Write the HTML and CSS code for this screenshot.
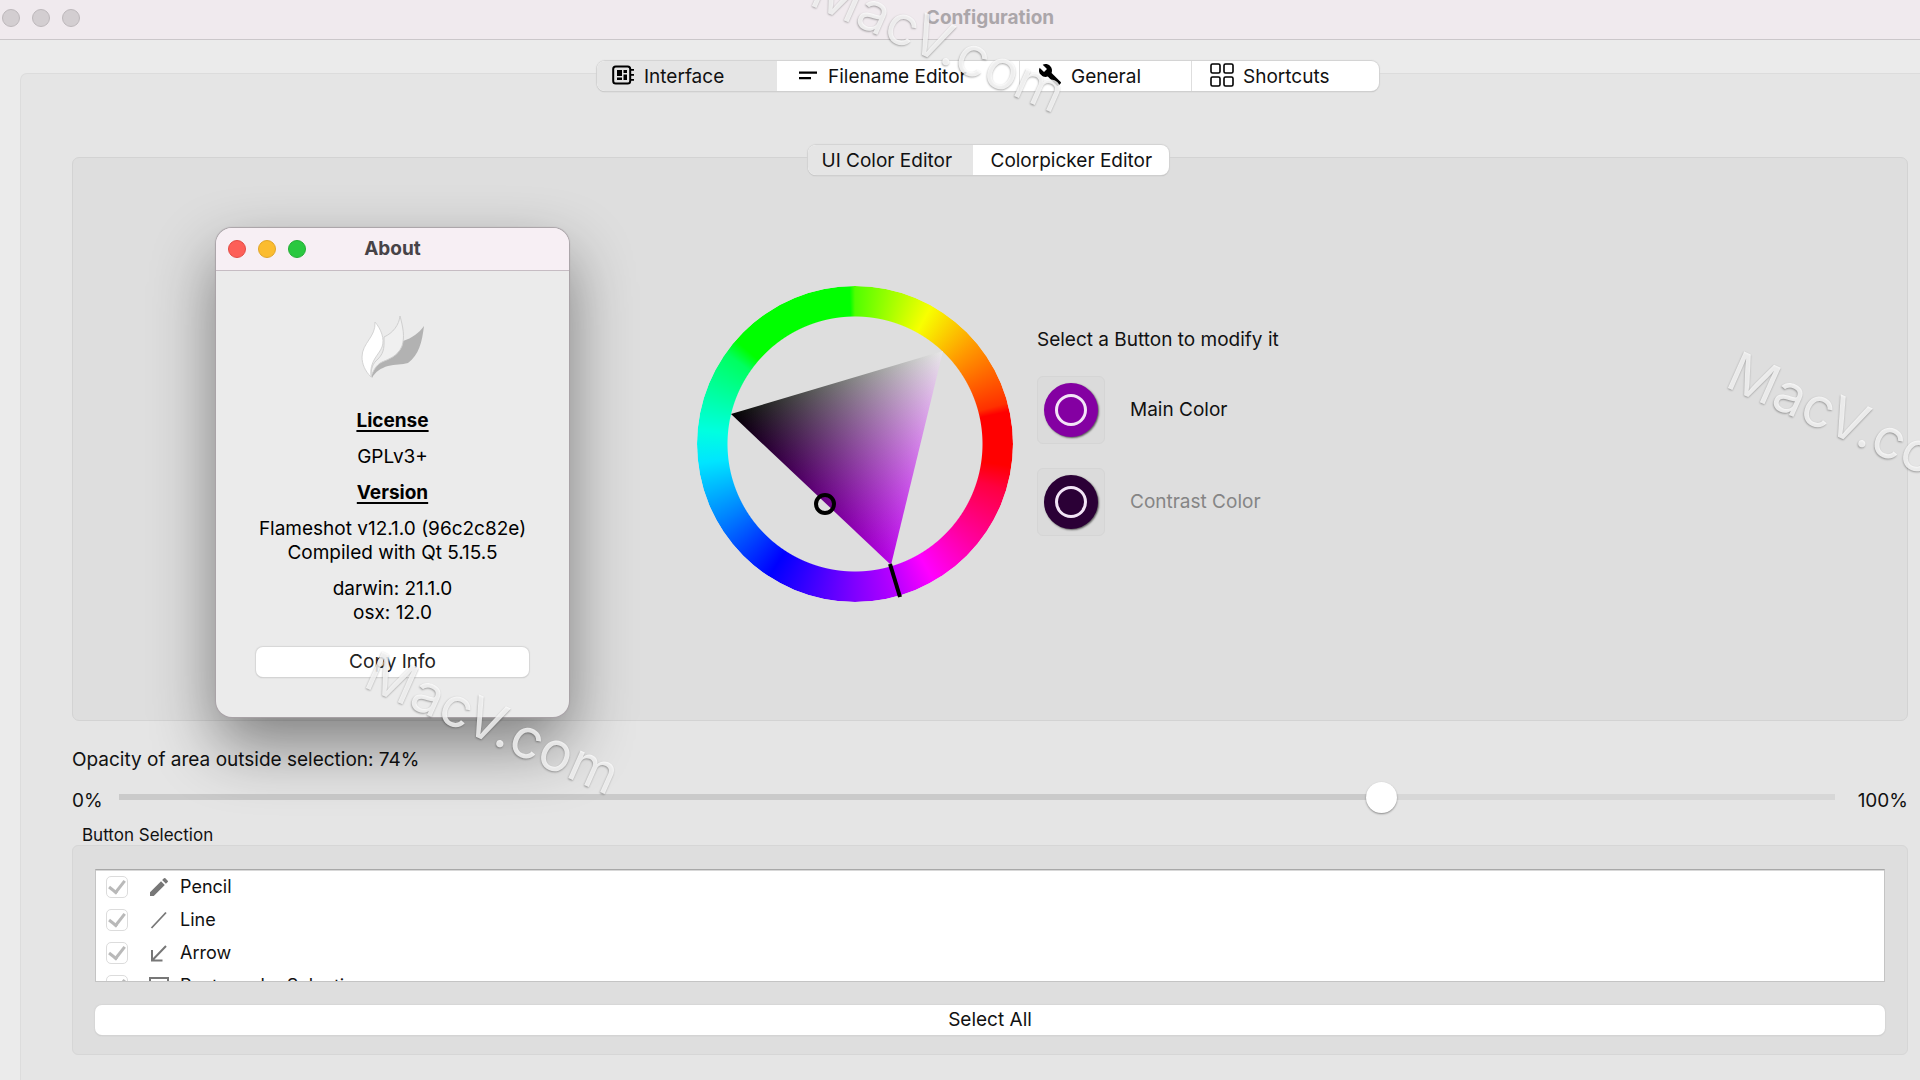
FILE: index.html
```html
<!DOCTYPE html>
<html lang="en">
<head>
<meta charset="utf-8">
<title>Configuration</title>
<link rel="stylesheet" href="styles.css">
</head>
<body>
<main class="window">
  <header class="titlebar">
    <div class="lights">
      <span class="light"></span><span class="light"></span><span class="light"></span>
    </div>
    <h1 class="title">Configuration</h1>
  </header>

  <div class="content">
    <nav class="tabs" role="tablist">
      <button class="tab tab-interface selected" role="tab" aria-selected="true">
        <svg class="tab-icon" viewBox="0 0 24 24" aria-hidden="true"><rect x="2.2" y="3.500" width="17" height="17" rx="2.5" fill="none" stroke="#000" stroke-width="2"/><path d="M20 6h3v1.800h-3zM20 11h3v1.800h-3zM20 16h3v1.800h-3zM6 7h5v6H6zM12.500 7H16v3h-3.500zM12.500 11.500H16V17h-3.500zM6 14.500h5V17H6z"/></svg>
        Interface
      </button>
      <button class="tab tab-filename" role="tab">
        <svg class="tab-icon" viewBox="0 0 24 24" aria-hidden="true"><path d="M4 8.500h18v2.200H4zM4 14h12v2.200H4z"/></svg>
        Filename Editor
      </button>
      <button class="tab tab-general" role="tab">
        <svg class="tab-icon" viewBox="0 0 24 24" aria-hidden="true"><path d="M22.700 19l-9.100-9.100c.9-2.300.4-5-1.500-6.900-2-2-5-2.400-7.400-1.300L9 6 6 9 1.600 4.700C.4 7.100.9 10.100 2.900 12.100c1.900 1.900 4.600 2.400 6.900 1.500l9.100 9.100c.4.4 1 .4 1.400 0l2.300-2.300c.5-.4.5-1.100.1-1.400z"/></svg>
        General
      </button>
      <button class="tab tab-shortcuts" role="tab">
        <svg class="tab-icon" viewBox="0 0 24 24" aria-hidden="true"><g fill="none" stroke="#000" stroke-width="1.600"><rect x="1" y="1" width="9" height="9" rx="1.500"/><rect x="14" y="1" width="9" height="9" rx="1.500"/><rect x="1" y="14" width="9" height="9" rx="1.500"/><rect x="14" y="14" width="9" height="9" rx="1.500"/></g></svg>
        Shortcuts
      </button>
    </nav>

    <section class="panel">
      <nav class="tabs" role="tablist">
        <button class="tab tab-ui selected" role="tab" aria-selected="true">UI Color Editor</button>
        <button class="tab tab-picker" role="tab">Colorpicker Editor</button>
      </nav>

      <section class="editor">
        <div class="wheel">
          <div class="wheel-ring"></div>
          <svg class="wheel-triangle" viewBox="0 0 316 316" aria-hidden="true">
            <defs>
              <linearGradient id="white" gradientUnits="userSpaceOnUse" x1="114" y1="204" x2="244" y2="66"><stop offset="0" stop-color="#000"/><stop offset="1" stop-color="#e6e6e6"/></linearGradient>
              <linearGradient id="hue" gradientUnits="userSpaceOnUse" x1="140" y1="97" x2="194" y2="279"><stop offset="0" stop-color="#000"/><stop offset="1" stop-color="#b800e8"/></linearGradient>
              <clipPath id="triangle"><path d="M34 128L246 65 194 279z"/></clipPath>
            </defs>
            <g class="mix" clip-path="url(#triangle)">
              <rect width="316" height="316" fill="url(#white)"/>
              <rect class="add" width="316" height="316" fill="url(#hue)"/>
            </g>
            <path d="M193 278l10 33" stroke="#000" stroke-width="4"/>
            <circle cx="128" cy="218" r="9" fill="none" stroke="#000" stroke-width="4"/>
          </svg>
        </div>
        <div class="choices">
          <p class="text">Select a Button to modify it</p>
          <div class="choice">
            <button class="swatch" id="main-color" aria-labelledby="main-label"><span class="disc disc-main"></span></button>
            <label id="main-label" for="main-color">Main Color</label>
          </div>
          <div class="choice">
            <button class="swatch" id="contrast-color" aria-labelledby="contrast-label"><span class="disc disc-contrast"></span></button>
            <label class="muted" id="contrast-label" for="contrast-color">Contrast Color</label>
          </div>
        </div>
      </section>

      <label class="opacity-label" for="opacity">Opacity of area outside selection: 74%</label>
      <div class="slider-row">
        <span class="slider-min">0%</span>
        <input class="slider" id="opacity" type="range" min="0" max="100" value="74">
        <span class="slider-max">100%</span>
      </div>

      <h2 class="group-title" id="group-title">Button Selection</h2>
      <section class="group" aria-labelledby="group-title">
        <ul class="list">
          <li><label class="item"><input class="check" type="checkbox" checked>
            <svg class="item-icon" viewBox="0 0 24 24" aria-hidden="true"><path d="M3 17.250V21h3.750L17.810 9.940l-3.750-3.750L3 17.250zM20.710 7.040a1 1 0 0 0 0-1.410l-2.340-2.340a1 1 0 0 0-1.410 0l-1.830 1.830 3.750 3.750 1.830-1.830z" fill="#777"/></svg>Pencil</label></li>
          <li><label class="item"><input class="check" type="checkbox" checked>
            <svg class="item-icon" viewBox="0 0 24 24" aria-hidden="true"><path d="M4.500 20L19 4.500" stroke="#777" stroke-width="1.800"/></svg>Line</label></li>
          <li><label class="item"><input class="check" type="checkbox" checked>
            <svg class="item-icon" viewBox="0 0 24 24" aria-hidden="true"><path d="M19 5L6 18.500M5 9v10.500h10.500" fill="none" stroke="#777" stroke-width="2"/></svg>Arrow</label></li>
          <li><label class="item"><input class="check" type="checkbox" checked>
            <svg class="item-icon" viewBox="0 0 24 24" aria-hidden="true"><rect x="3" y="4" width="18" height="16" fill="none" stroke="#777" stroke-width="2"/></svg>Rectangular Selection</label></li>
        </ul>
        <button class="push">Select All</button>
      </section>
    </section>
  </div>
</main>

<aside class="about" role="dialog" aria-labelledby="about-title">
  <header class="about-bar">
    <div class="lights">
      <span class="light red"></span><span class="light amber"></span><span class="light green"></span>
    </div>
    <h2 class="about-title" id="about-title">About</h2>
  </header>
  <div class="about-body">
    <svg class="logo" viewBox="0 0 64 64" aria-hidden="true">
      <path d="M11 63C8 58 11 50 20 46C32 41 38 34 42 26C51 23 58 18 63 11C61 27 58 40 47 48C41 50 34 49 27 51C20 53 14 57 11 63z" fill="#b2b2b2"/>
      <path d="M10 62C10 54 11 49 17 44C24 37 23 30 23 22C32 18 38 10 39 1C42 12 44 22 41 31C37 41 28 44 21 47C15 50 12 56 10 62z" fill="#f0f0f0" stroke="#cfcfcf"/>
      <path d="M10 62C4 56 1 49 1 42C1 28 15 22 14 7C20 14 24 24 21 32C18 40 8 46 10 62z" fill="#fff" stroke="#d4d4d4"/>
    </svg>
    <h3 class="about-heading">License</h3>
    <p class="about-text">GPLv3+</p>
    <h3 class="about-heading">Version</h3>
    <p class="about-text">Flameshot v12.1.0 (96c2c82e)<br>Compiled with Qt 5.15.5</p>
    <p class="about-text">darwin: 21.1.0<br>osx: 12.0</p>
    <button class="push copy">Copy Info</button>
  </div>
</aside>

<span class="mark mark-top">MacV.com</span>
<span class="mark mark-left">MacV.com</span>
<span class="mark mark-right">MacV.com</span>
</body>
</html>
```
FILE: styles.css
```css
* {
  box-sizing: border-box;
}

body {
  position: relative;
  margin: 0;
  min-height: 100vh;
  overflow: hidden;
  background: #ebebeb;
  color: #111;
  font: 19px/24px Inter, "Liberation Sans", sans-serif;
}

h1, h2, h3, p, ul {
  margin: 0;
  padding: 0;
}

button {
  font: inherit;
  color: inherit;
}

/* The window runs past the right edge of the screen. */
.window {
  display: flex;
  flex-direction: column;
  width: calc(100% + 60px);
  height: 100vh;
}

.titlebar {
  display: grid;
  grid-template-columns: 1fr auto 1fr;
  align-items: center;
  flex: none;
  height: 40px;
  padding: 0 2px 4px;
  background: #f0eaee;
  border-bottom: 1px solid #cbc7ca;
}

.title {
  font-size: 19px;
  font-weight: 700;
  color: #aba6aa;
}

.lights {
  display: flex;
  gap: 12px;
}

.light {
  width: 18px;
  height: 18px;
  border: 1px solid #bdb8bb;
  border-radius: 50%;
  background: #d3ced1;
}

.red {
  background: #fd5f58;
  border-color: #e24b44;
}

.amber {
  background: #fbbc2f;
  border-color: #e0a428;
}

.green {
  background: #2ac840;
  border-color: #24ad36;
}

.content {
  display: flex;
  flex-direction: column;
  flex: 1;
  padding: 21px 20px 0;
}

.tabs {
  position: relative;
  display: flex;
  align-self: center;
  height: 30px;
  margin: 0 4px -18px 0;
  border-radius: 8px;
  background: #fff;
  box-shadow: 0 0 1px 1px #d2d2d2, 0 1px 1px 0 #b0b0b0;
}

.tab {
  display: flex;
  align-items: center;
  gap: 9px;
  padding: 1px 14px 0;
  border: 0;
  border-left: 1px solid #dedede;
  background: none;
  white-space: nowrap;
}

.tab.selected {
  border-left: 0;
  border-radius: 8px 0 0 8px;
  background: #e5e5e5;
}

.tab.selected + .tab {
  border-left: 0;
}

.tab-icon {
  width: 24px;
  height: 24px;
  flex: none;
  margin-bottom: 3px;
}

.tab-interface {
  width: 180px;
}

.tab-filename {
  width: 242px;
  padding-left: 18px;
}

.tab-general {
  width: 172px;
  padding-left: 18px;
}

.tab-shortcuts {
  width: 188px;
  padding-left: 18px;
}

.tab-ui {
  width: 165px;
}

.tab-picker {
  width: 196px;
  padding-left: 18px;
}

.panel {
  display: flex;
  flex-direction: column;
  flex: 1;
  padding: 71px 51px 0;
  border: 1px solid #dcdcdc;
  border-bottom: 0;
  border-radius: 7px 7px 0 0;
  background: #e5e5e5;
}

.editor {
  display: flex;
  justify-content: center;
  gap: 24px;
  padding: 128px 0 118px;
  border: 1px solid #d3d3d3;
  border-radius: 7px;
  background: #dedede;
}

.wheel {
  display: grid;
  width: 316px;
  height: 316px;
}

.wheel-ring, .wheel-triangle {
  grid-area: 1 / 1;
}

.wheel-ring {
  border-radius: 50%;
  background: conic-gradient(#50ff00 0deg, #f8ff00 29deg, #ff9a00 50deg, #ff3000 75deg, #f00 78deg, #f00 98deg, #ff0040 107deg, #ff00a0 130deg, #f0f 150deg, #b400ff 165deg, #8000ff 180deg, #00f 213deg, #0080ff 240deg, #00e5ff 263deg, #00ffe0 275deg, #00ff60 305deg, #0f0 311deg, #0f0 358deg, #50ff00 360deg);
  mask: radial-gradient(circle, transparent 127px, #000 128px);
}

.wheel-triangle {
  z-index: 1;
  width: 316px;
  height: 316px;
}

.mix {
  isolation: isolate;
}

.add {
  mix-blend-mode: plus-lighter;
}

.choices {
  width: 246px;
  padding-top: 42px;
  white-space: nowrap;
}

.choice {
  display: flex;
  align-items: center;
  gap: 25px;
  margin-top: 24px;
}

.muted {
  color: #858585;
}

.swatch {
  display: grid;
  place-items: center;
  width: 68px;
  height: 68px;
  padding: 0;
  border: 1px solid #d5d5d5;
  border-radius: 6px;
  background: #dbdbdb;
}

.disc {
  display: grid;
  place-items: center;
  width: 54px;
  height: 54px;
  border-radius: 50%;
  box-shadow: 1px 1px 2px #0009;
}

.disc::after {
  content: "";
  width: 26px;
  height: 26px;
  border: 3px solid #f3e4f7;
  border-radius: 50%;
}

.disc-main {
  background: #8400a2;
}

.disc-contrast {
  background: #2b0036;
}

.opacity-label {
  margin-top: 27px;
}

.slider-row {
  display: flex;
  align-items: flex-end;
  height: 32px;
  margin-top: 9px;
}

.slider-min {
  width: 47px;
}

.slider-max {
  width: 73px;
  text-align: right;
}

.slider {
  flex: 1;
  min-width: 0;
  height: 32px;
  margin: 0;
  appearance: none;
  background: linear-gradient(90deg, #cacaca 74%, #d7d7d7 74%) center / 100% 6px no-repeat;
}

.slider::-webkit-slider-thumb {
  appearance: none;
  width: 31px;
  height: 31px;
  border-radius: 50%;
  background: #fff;
  box-shadow: 0 1px 2px #0006;
}

.group-title {
  margin: 12px 10px 0;
  font-size: 17px;
  line-height: 20px;
  font-weight: 400;
}

.group {
  display: flex;
  flex-direction: column;
  gap: 23px;
  padding: 23px 22px 19px;
  border: 1px solid #d6d6d6;
  border-radius: 6px;
  background: #dedede;
}

.list {
  height: 113px;
  overflow: hidden;
  border: 1px solid #c4c4c4;
  border-top-color: #a8a8a8;
  background: #fff;
  box-shadow: inset 0 1px #d8d8d8;
  list-style: none;
}

.item {
  display: flex;
  align-items: center;
  height: 33px;
  padding-left: 10px;
  font-size: 18px;
}

.check {
  display: grid;
  place-items: center;
  appearance: none;
  width: 22px;
  height: 22px;
  margin: 0;
  border: 1px solid #dcdcdc;
  border-radius: 5px;
}

.check::after {
  content: "";
  width: 7px;
  height: 13px;
  margin-bottom: 3px;
  border: solid #b9b9b9;
  border-width: 0 3px 3px 0;
  transform: rotate(38deg);
}

.item-icon {
  width: 24px;
  height: 24px;
  margin: 0 9px 0 19px;
}

.push {
  height: 30px;
  padding: 0;
  border: 0;
  border-radius: 7px;
  background: #fff;
  box-shadow: 0 0 1px 1px #d6d6d6, 0 1px 1px 0 #b8b8b8;
}

/* Dialog floating over the window. */
.about {
  position: absolute;
  left: 216px;
  top: 228px;
  width: 353px;
  border-radius: 16px;
  overflow: hidden;
  background: #ebebeb;
  color: #000;
  box-shadow: 0 0 1px 1px #a9a2a7, 0 28px 64px 0 #00000073;
}

.about-bar {
  display: grid;
  grid-template-columns: 1fr auto 1fr;
  align-items: center;
  height: 43px;
  padding: 0 12px;
  background: #f7eff4;
  border-bottom: 1px solid #c6bcc3;
}

.about-title {
  font-size: 19px;
  font-weight: 700;
  color: #474347;
}

.about-body {
  display: flex;
  flex-direction: column;
  align-items: center;
  gap: 12px;
  padding: 44px 40px 40px;
  text-align: center;
  white-space: nowrap;
}

.logo {
  width: 64px;
  height: 64px;
  margin-bottom: 18px;
}

.about-heading {
  font-size: 19px;
  font-weight: 700;
  text-decoration: underline;
  text-decoration-thickness: 2px;
  text-underline-offset: 3px;
}

.copy {
  width: 100%;
  margin-top: 10px;
  color: #222;
}

.mark {
  position: absolute;
  transform: rotate(24deg);
  transform-origin: 0 47px;
  font: 55px/56px Inter, "Liberation Sans", sans-serif;
  color: #fffc;
  text-shadow: 0 1px 2px #0005;
  pointer-events: none;
}

.mark-top {
  left: 808px;
  top: -44px;
}

.mark-left {
  left: 362px;
  top: 638px;
}

.mark-right {
  left: 1724px;
  top: 338px;
}
```
